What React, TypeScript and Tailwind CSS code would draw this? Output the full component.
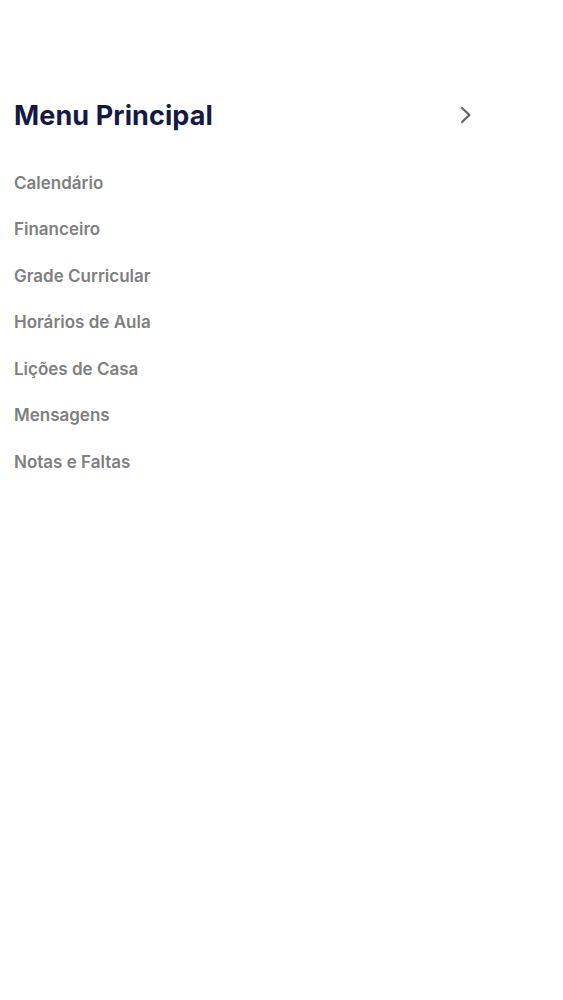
import React from "react";

const items = [
  "Calendário",
  "Financeiro",
  "Grade Curricular",
  "Horários de Aula",
  "Lições de Casa",
  "Mensagens",
  "Notas e Faltas",
];

export default function App() {
  return (
    <div className="min-h-screen bg-white" style={{ fontFamily: "Inter, 'Noto Sans', sans-serif" }}>
      <div className="pt-[96px] pl-[14px] pr-[88px]">
        <div className="flex items-center justify-between h-[40px]">
          <h1 className="text-[27px] font-bold text-[#151a45] tracking-[0.1px]">Menu Principal</h1>
          <svg width="14" height="20" viewBox="0 0 14 20" fill="none" className="mr-[2px] mt-[-2px]">
            <path d="M3 3l7.5 7L3 17" stroke="#646464" strokeWidth="2.2" strokeLinecap="round" strokeLinejoin="round" />
          </svg>
        </div>
        <ul className="mt-[24px] flex flex-col">
          {items.map((t) => (
            <li key={t} className="h-[46.5px] flex items-center text-[17px] font-semibold text-[#7f7f7f]">
              {t}
            </li>
          ))}
        </ul>
      </div>
    </div>
  );
}
